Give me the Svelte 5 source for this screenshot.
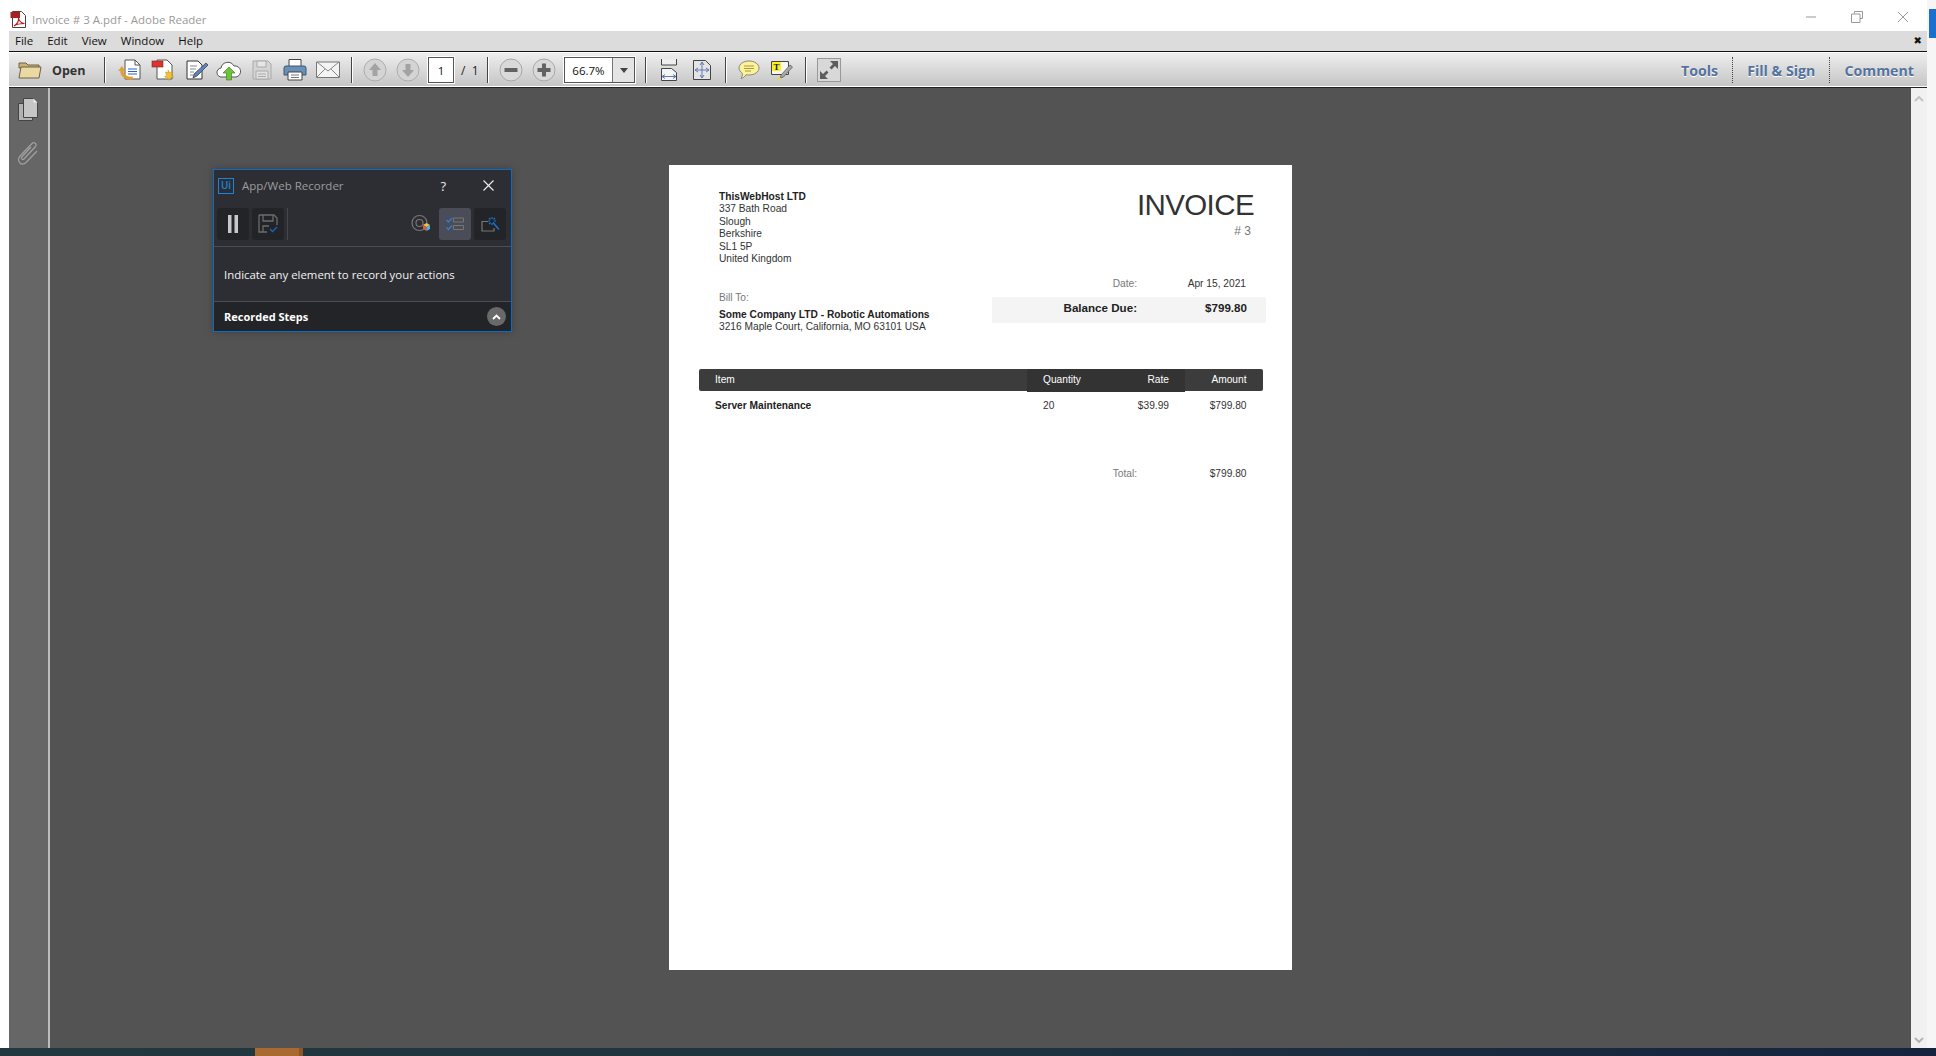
<script lang="ts">
  const menus = ['File', 'Edit', 'View', 'Window', 'Help'];
  const addressLines = ['337 Bath Road', 'Slough', 'Berkshire', 'SL1 5P', 'United Kingdom'];
</script>

<div class="screen">
  <div class="desktop">
    <div class="window">
      <header class="titlebar">
        <svg class="pdf-icon" width="17" height="17" viewBox="0 0 17 17">
          <path d="M2.500.500h9l4 4v12h-13z" fill="#fff" stroke="#5a3a3a"/>
          <path d="M.5 1h9.500v6H.5z" fill="#a32222"/>
          <path d="M4 15c3-2 5-5 4.500-8 .5 3 3 5 6 5.500-4 0-7.500.5-10.500 2.500z" fill="none" stroke="#b02020" stroke-width="1.200"/>
        </svg>
        <span class="title">Invoice # 3 A.pdf - Adobe Reader</span>
        <div class="window-controls">
          <svg width="12" height="12" viewBox="0 0 12 12"><path d="M1 6h10" stroke="#999" stroke-width="1"/></svg>
          <svg width="12" height="12" viewBox="0 0 12 12"><path d="M3.500 2.500V.5h8v7h-2.500M.5 3h8.500v8.500H.5z" fill="none" stroke="#999"/></svg>
          <svg width="12" height="12" viewBox="0 0 12 12"><path d="M1 1l10 10M11 1L1 11" stroke="#999"/></svg>
        </div>
      </header>

      <nav class="menubar">
        {#each menus as m}<span>{m}</span>{/each}
        <span class="menu-close">✖</span>
      </nav>

      <div class="toolbar">
        <button class="open-btn">
          <svg width="24" height="20" viewBox="0 0 24 20">
            <path d="M1 3h7l2 2h11v3H1z" fill="#c8b27a" stroke="#6f6242"/>
            <path d="M1 18L3 7h20l-2 11z" fill="#ebd9a3" stroke="#6f6242"/>
          </svg>
          Open
        </button>
        <i class="sep first"></i>

        <span class="tb">
          <svg width="24" height="24" viewBox="0 0 24 24">
            <path d="M7 2h10l5 5v14H7z" fill="#fff" stroke="#555"/>
            <path d="M17 2v5h5" fill="none" stroke="#555"/>
            <path d="M10 11h9M10 13.500h9M10 16h9" stroke="#2f62c0"/>
            <path d="M4 12c-1 5 4 9 11 8" fill="none" stroke="#e0a030" stroke-width="3"/>
            <path d="M4 8l-4 5h7z" fill="#e0a030"/>
          </svg>
        </span>
        <span class="tb">
          <svg width="24" height="24" viewBox="0 0 24 24">
            <path d="M6 2h10l5 5v14H6z" fill="#fff" stroke="#555"/>
            <rect x="1" y="3" width="11" height="6" fill="#d8362e" stroke="#8c1f1a" stroke-width=".6"/>
            <path d="M17 12l1.500 2.500 3-.5-1 3 2 2-3 .5-1.500 3-1.500-3-3-.5 2-2-1-3 3 .5z" fill="#f2c230" stroke="#b88a10" stroke-width=".5"/>
          </svg>
        </span>
        <span class="tb">
          <svg width="24" height="24" viewBox="0 0 24 24">
            <path d="M3 3h11l4 4v14H3z" fill="#fff" stroke="#333"/>
            <path d="M6 8h7M6 11h6M6 14h4M6 17h3" stroke="#888"/>
            <path d="M22 5l2 2-11 11-4 2 1-4z" fill="#5d84ba" stroke="#333" stroke-width=".7"/>
          </svg>
        </span>
        <span class="tb">
          <svg width="26" height="24" viewBox="0 0 26 24">
            <path d="M6 19a4.500 4.500 0 0 1-1-9 7 7 0 0 1 13-2 5.500 5.500 0 0 1 2 11z" fill="#fff" stroke="#555"/>
            <path d="M13 9l6 6h-3.500v7h-5v-7H7z" fill="#6fc23c" stroke="#3f8a1c" stroke-width=".7"/>
          </svg>
        </span>
        <span class="tb">
          <svg width="20" height="20" viewBox="0 0 20 20" fill="none" stroke="#aaa">
            <path d="M1 1h15l3 3v15H1z" fill="#d4d4d4"/>
            <path d="M5 1h9v6H5z" fill="#e6e6e6"/>
            <path d="M4 11h12v8H4z" fill="#e2e2e2"/>
            <path d="M6 14h8M6 16.500h8"/>
          </svg>
        </span>
        <span class="tb">
          <svg width="24" height="24" viewBox="0 0 24 24">
            <path d="M6 1.500h12v7H6z" fill="#fff" stroke="#444"/>
            <path d="M3 8h18a2 2 0 0 1 2 2v7H1v-7a2 2 0 0 1 2-2z" fill="#6a90b8" stroke="#3a5675"/>
            <path d="M5 14h14v8H5z" fill="#fff" stroke="#444"/>
            <path d="M8 17h8M8 19.500h8" stroke="#777"/>
          </svg>
        </span>
        <span class="tb">
          <svg width="24" height="18" viewBox="0 0 24 18">
            <path d="M.5 1h23v15.500H.5z" fill="#f4f4f4" stroke="#777"/>
            <path d="M1 1l11 9L23 1M1 16l8-8M23 16l-8-8" fill="none" stroke="#888"/>
          </svg>
        </span>
        <i class="sep"></i>

        <span class="tb">
          <svg width="24" height="24" viewBox="0 0 24 24">
            <circle cx="12" cy="12" r="11" fill="#d4d4d4" stroke="#adadad"/>
            <path d="M12 5l6 7h-3.500v6h-5v-6H6z" fill="#a3a3a3"/>
          </svg>
        </span>
        <span class="tb">
          <svg width="24" height="24" viewBox="0 0 24 24">
            <circle cx="12" cy="12" r="11" fill="#d4d4d4" stroke="#adadad"/>
            <path d="M12 19l6-7h-3.500V6h-5v6H6z" fill="#a3a3a3"/>
          </svg>
        </span>
        <span class="page-box">1</span>
        <span class="page-count">/&nbsp;&nbsp;1</span>
        <i class="sep after-count"></i>

        <span class="tb">
          <svg width="24" height="24" viewBox="0 0 24 24">
            <circle cx="12" cy="12" r="11" fill="#d9d9d9" stroke="#a8a8a8"/>
            <path d="M5.500 10h13v4h-13z" fill="#626262"/>
          </svg>
        </span>
        <span class="tb">
          <svg width="24" height="24" viewBox="0 0 24 24">
            <circle cx="12" cy="12" r="11" fill="#d9d9d9" stroke="#a8a8a8"/>
            <path d="M10 5.500h4V10h4.500v4H14v4.500h-4V14H5.500v-4H10z" fill="#626262"/>
          </svg>
        </span>
        <div class="zoom-box">
          <span class="zoom-value">66.7%</span>
          <span class="zoom-arrow"><svg width="8" height="5" viewBox="0 0 8 5"><path d="M0 0h8L4 5z" fill="#444"/></svg></span>
        </div>
        <i class="sep after-zoom"></i>

        <span class="tb">
          <svg width="18" height="22" viewBox="0 0 18 22">
            <path d="M1.500 0v6h15V0" fill="#eee" stroke="#444"/>
            <path d="M1.500 9.500h10l5 4v8h-15z" fill="#f4f4f4" stroke="#444"/>
            <path d="M2 17.500h14M2 17.500l3-2M2 17.500l3 2M16 17.500l-3-2M16 17.500l-3 2" fill="none" stroke="#6078b8"/>
          </svg>
        </span>
        <span class="tb">
          <svg width="18" height="20" viewBox="0 0 18 20">
            <path d="M.5.500h12l5 5v14H.5z" fill="#e4e4e4" stroke="#444"/>
            <path d="M9 2v16M2 10h14M9 2L7 5M9 2l2 3M9 18l-2-3M9 18l2-3M2 10l3-2M2 10l3 2M16 10l-3-2M16 10l-3 2" fill="none" stroke="#6078b8"/>
          </svg>
        </span>
        <i class="sep after-fit"></i>

        <span class="tb">
          <svg width="22" height="20" viewBox="0 0 22 20">
            <path d="M11 1c5.500 0 10 3 10 7s-4.500 7-10 7c-1 0-2 0-3-.300C7 16.500 5.500 18 3 18.500c1-1.500 1.500-3 1.500-5C2.500 12 1 10 1 8c0-4 4.500-7 10-7z" fill="#fbf29a" stroke="#8a8a7a"/>
            <path d="M6 6h10M6 8.500h10M7 11h6" stroke="#a89a40"/>
          </svg>
        </span>
        <span class="tb">
          <svg width="22" height="22" viewBox="0 0 22 22">
            <path d="M.5 2.500h17v13H.5z" fill="#f6f6f6" stroke="#444"/>
            <rect x="1" y="3" width="9" height="9" fill="#fdf01e"/>
            <text x="5.500" y="10.500" class="t-glyph" text-anchor="middle">T</text>
            <path d="M19 6l2.500 2-9 10-3 1 .5-3z" fill="#a8a8a8" stroke="#555" stroke-width=".7"/>
            <circle cx="8" cy="20" r="1.800" fill="#e8d25a"/>
          </svg>
        </span>
        <i class="sep after-note"></i>

        <span class="expand">
          <svg width="20" height="20" viewBox="0 0 20 20">
            <path d="M11 1h8v8l-3-3-3.500 3.500-2-2L14 4zM9 19H1v-8l3 3 3.500-3.500 2 2L6 16z" fill="#5c5c5c"/>
          </svg>
        </span>

        <div class="panel-links">
          <span class="link">Tools</span>
          <i class="dots"></i>
          <span class="link">Fill &amp; Sign</span>
          <i class="dots"></i>
          <span class="link">Comment</span>
        </div>
      </div>

      <div class="workspace">
        <aside class="rail">
          <svg width="20" height="23" viewBox="0 0 20 23">
            <path d="M.5 5.500h14v17H.5z" fill="#b2b2b2" stroke="#444"/>
            <path d="M5.500.500h10l4 4v15h-14z" fill="#c6c6c6" stroke="#444"/>
            <path d="M15.500.500v4h4z" fill="#eee"/>
          </svg>
          <svg width="22" height="26" viewBox="0 0 22 26" fill="none" stroke="#a0a0a0" stroke-width="1.300">
            <path d="M4 15L15 3.500c2-2 5.500.5 3.500 3L7 19c-1.300 1.300-3.500-.5-2-2.300L14 7"/>
            <path d="M4 15c-3 3-3 6-1 8 2 1.800 4.500 1 6.500-1L20 11"/>
          </svg>
        </aside>

        <main class="document">
          <section class="page">
            <div class="page-head">
              <div class="from">
                <b>ThisWebHost LTD</b>
                {#each addressLines as line}<div>{line}</div>{/each}
              </div>
              <div class="heading">
                <h1>INVOICE</h1>
                <div class="number"># 3</div>
              </div>
            </div>

            <div class="page-meta">
              <div class="bill">
                <div class="bill-label">Bill To:</div>
                <b>Some Company LTD - Robotic Automations</b>
                <div>3216 Maple Court, California, MO 63101 USA</div>
              </div>
              <div class="dates">
                <div class="date-row">
                  <span class="k">Date:</span>
                  <span class="v">Apr 15, 2021</span>
                </div>
                <div class="balance">
                  <span class="k">Balance Due:</span>
                  <span class="v">$799.80</span>
                </div>
              </div>
            </div>

            <div class="table-head">
              <span class="c-item">Item</span>
              <div class="mid">
                <span>Quantity</span>
                <span>Rate</span>
              </div>
              <span class="c-amount">Amount</span>
            </div>
            <div class="table-row">
              <b class="c-item">Server Maintenance</b>
              <span class="c-qty">20</span>
              <span class="c-rate">$39.99</span>
              <span class="c-amount">$799.80</span>
            </div>
            <div class="total">
              <span class="k">Total:</span>
              <span class="v">$799.80</span>
            </div>
          </section>
        </main>

        <div class="scrollbar">
          <svg width="10" height="6" viewBox="0 0 10 6"><path d="M1 5l4-4 4 4" fill="none" stroke="#c4c4c4" stroke-width="2"/></svg>
          <svg width="10" height="6" viewBox="0 0 10 6"><path d="M1 1l4 4 4-4" fill="none" stroke="#b4b4b4" stroke-width="2"/></svg>
        </div>

        <!-- floating recorder over the viewer -->
        <div class="recorder">
          <div class="rec-title">
            <span class="ui-logo">Ui</span>
            <span class="rec-name">App/Web Recorder</span>
            <span class="rec-help">?</span>
            <svg class="rec-x" width="11" height="11" viewBox="0 0 11 11"><path d="M.5.500l10 10M10.500.500l-10 10" stroke="#eee" stroke-width="1.100"/></svg>
          </div>
          <div class="rec-tools">
            <span class="rec-btn">
              <svg width="12" height="18" viewBox="0 0 12 18"><path d="M1 0h3.500v18H1zM7.500 0H11v18H7.500z" fill="#c8c8c8"/></svg>
            </span>
            <span class="rec-btn">
              <svg width="20" height="20" viewBox="0 0 20 20" fill="none">
                <path d="M1 1h15l3 3v7M1 1v17h8M5 1v6h10V1M5 18v-6h6" stroke="#6c6c6c" stroke-width="1.300"/>
                <path d="M12 15l2.500 2.500L19 13" stroke="#1666b8" stroke-width="1.300"/>
              </svg>
            </span>
            <i class="rec-sep"></i>
            <span class="rec-target">
              <svg width="20" height="20" viewBox="0 0 20 20" fill="none">
                <circle cx="8.500" cy="9" r="7.500" stroke="#777" stroke-width="1.200"/>
                <circle cx="8.500" cy="9" r="3.500" stroke="#777" stroke-width="1.200"/>
                <path d="M12 11l3.500-2 3.500 2-3.500 2z" fill="#f2c23c"/>
                <path d="M12 11v4l3.500 2v-4z" fill="#e0583a"/>
                <path d="M19 11v4l-3.500 2v-4z" fill="#4ab4e8"/>
              </svg>
            </span>
            <span class="rec-btn active">
              <svg width="18" height="14" viewBox="0 0 18 14" fill="none">
                <path d="M.5 3l2 2L6 1M.5 10.500l2 2L6 8.500" stroke="#2a80d8" stroke-width="1.300"/>
                <path d="M7.500 1h10v4h-10zM7.500 8.500h10v4h-10z" stroke="#777"/>
              </svg>
            </span>
            <span class="rec-btn">
              <svg width="19" height="15" viewBox="0 0 19 15" fill="none">
                <path d="M7 4.500H1v9.500h12v-3" stroke="#777" stroke-width="1.200"/>
                <path d="M11 0v2M11 6v2M7 4h2M13 4h2M8 1l1.500 1.500M14 1l-1.500 1.500M8 7l1.500-1.500" stroke="#1a74d0" stroke-width="1.200"/>
                <path d="M12 5.500l6 7" stroke="#1a74d0" stroke-width="1.500"/>
              </svg>
            </span>
          </div>
          <div class="rec-message">Indicate any element to record your actions</div>
          <div class="rec-footer">
            <b>Recorded Steps</b>
            <span class="rec-collapse">
              <svg width="9" height="6" viewBox="0 0 9 6"><path d="M1 5l3.500-3.500L8 5" fill="none" stroke="#fff" stroke-width="1.800"/></svg>
            </span>
          </div>
        </div>
      </div>
    </div>

    <div class="edge"><div class="edge-blue"></div></div>
  </div>

  <footer class="taskbar">
    <span class="task-active"></span>
    <span class="clock">10:50 AM</span>
  </footer>
</div>

<style>
  :global(body) {
    margin: 0;
    background: #fff;
  }

  .screen {
    width: 1936px;
    height: 1056px;
    display: flex;
    flex-direction: column;
    overflow: hidden;
    font-family: "Open Sans", "Noto Sans", sans-serif;
    background: #fff;
  }

  .desktop {
    flex: 1;
    min-height: 0;
    display: flex;
    padding-left: 9px;
  }

  .window {
    flex: 1;
    min-width: 0;
    display: flex;
    flex-direction: column;
  }

  .titlebar {
    height: 31px;
    display: flex;
    align-items: center;
    padding-left: 1px;
    padding-top: 7px;
    box-sizing: border-box;
    background: #fff;
  }

  .pdf-icon {
    margin-right: 5px;
  }

  .title {
    font-size: 11.5px;
    color: #9a9a9a;
  }

  .window-controls {
    margin-left: auto;
    display: flex;
    gap: 34px;
    padding-right: 18px;
    margin-top: -5px;
  }

  .menubar {
    height: 20px;
    box-sizing: border-box;
    padding: 0 0 2px 6px;
    display: flex;
    align-items: center;
    gap: 14px;
    background: #dcdcdc;
    font-size: 11.5px;
    color: #111;
  }

  .menu-close {
    margin-left: auto;
    margin-right: 5px;
    font-size: 10px;
    font-family: "DejaVu Sans", sans-serif;
    color: #111;
  }

  .toolbar {
    height: 34px;
    display: flex;
    align-items: center;
    border-top: 1px solid #111;
    border-bottom: 1px solid #222;
    box-shadow: inset 0 1px 0 #fff, inset 0 -1px 0 #fff;
    background: linear-gradient(#efefef, #c4c4c4);
    padding-top: 1px;
  }

  .open-btn {
    display: flex;
    align-items: center;
    gap: 10px;
    width: 95px;
    padding: 0 0 0 9px;
    box-sizing: border-box;
    border: none;
    background: none;
    font: 700 12.5px "Open Sans", sans-serif;
    color: #333;
  }

  .sep {
    width: 1px;
    height: 26px;
    background: #444;
    box-shadow: 1px 0 0 #fff;
    margin: 0 6px 0 7px;
  }

  .sep.first {
    margin: 0 8px 0 0;
  }

  .sep.after-count {
    margin-left: 9px;
  }

  .sep.after-zoom {
    margin-left: 10px;
  }

  .sep.after-fit {
    margin-left: 7px;
  }

  .sep.after-note {
    margin-left: 7px;
    margin-right: 11px;
  }

  .tb {
    width: 33px;
    height: 26px;
    display: flex;
    align-items: center;
    justify-content: center;
    flex: none;
  }

  .page-box {
    width: 26px;
    height: 26px;
    margin-left: 4px;
    box-sizing: border-box;
    border: 1px solid #555;
    outline: 1px solid #fff;
    background: #fff;
    font-size: 11.5px;
    color: #111;
    display: flex;
    align-items: center;
    justify-content: center;
  }

  .page-count {
    margin-left: 7px;
    width: 17px;
    font-size: 12px;
    color: #222;
    white-space: nowrap;
  }

  .zoom-box {
    width: 71px;
    height: 26px;
    margin-left: 4px;
    box-sizing: border-box;
    border: 1px solid #555;
    outline: 1px solid #fff;
    background: #fff;
    display: flex;
  }

  .zoom-value {
    flex: 1;
    font-size: 11.5px;
    color: #111;
    display: flex;
    align-items: center;
    justify-content: center;
  }

  .zoom-arrow {
    width: 21px;
    border-left: 1px solid #777;
    background: #e4e4e4;
    display: flex;
    align-items: center;
    justify-content: center;
  }

  .t-glyph {
    font: 700 9px "Liberation Serif", serif;
    fill: #222;
  }

  .expand {
    width: 24px;
    height: 24px;
    box-sizing: border-box;
    border: 1px solid #999;
    background: #d8d8d8;
    display: flex;
    align-items: center;
    justify-content: center;
  }

  .panel-links {
    margin-left: auto;
    display: flex;
    align-items: center;
    padding-right: 13px;
  }

  .link {
    font-size: 14.2px;
    font-weight: 700;
    color: #54739e;
    text-shadow: 0 1px 0 #fff;
  }

  .dots {
    height: 26px;
    border-left: 1px dotted #444;
    margin: 0 14px;
  }

  .workspace {
    flex: 1;
    min-height: 0;
    display: flex;
    position: relative;
  }

  .rail {
    width: 41px;
    flex: none;
    box-sizing: border-box;
    background: #666;
    border-right: 2px solid #bdbdbd;
    box-shadow: 1px 0 0 #333;
    display: flex;
    flex-direction: column;
    align-items: center;
    gap: 19px;
    padding-top: 10px;
    padding-right: 2px;
  }

  .document {
    flex: 1;
    min-width: 0;
    background: #535353;
    display: flex;
    justify-content: center;
    align-items: flex-start;
    padding-top: 77px;
  }

  .scrollbar {
    width: 16px;
    flex: none;
    background: #f1f1f1;
    display: flex;
    flex-direction: column;
    justify-content: space-between;
    align-items: center;
    padding: 8px 0 5px;
    box-sizing: border-box;
  }

  /* pdf page */
  .page {
    width: 623px;
    height: 805px;
    box-sizing: border-box;
    background: #fff;
    padding: 26px 0 0 50px;
    font-family: "Liberation Sans", Arial, sans-serif;
    font-size: 10.2px;
    line-height: 12.4px;
    color: #333;
  }

  .page b {
    color: #222;
  }

  .page-head {
    display: flex;
    justify-content: space-between;
    height: 74px;
  }

  .from b {
    display: block;
  }

  .heading {
    text-align: right;
    padding-right: 38px;
  }

  h1 {
    margin: -3px 0 0;
    font-size: 29.5px;
    letter-spacing: -0.6px;
    line-height: 34px;
    font-weight: 400;
    color: #333;
  }

  .number {
    margin-top: 2px;
    padding-right: 3px;
    font-size: 12px;
    line-height: 14px;
    color: #777;
  }

  .page-meta {
    display: flex;
    justify-content: space-between;
    height: 104px;
  }

  .bill {
    padding-top: 27px;
  }

  .bill-label {
    color: #777;
    margin-bottom: 4.6px;
  }

  .bill b {
    display: block;
    font-size: 10.2px;
  }

  .dates {
    width: 274px;
    margin-right: 26px;
    padding-top: 13px;
  }

  .date-row,
  .balance {
    display: flex;
  }

  .k {
    width: 145px;
    text-align: right;
    color: #777;
  }

  .v {
    flex: 1;
    text-align: right;
  }

  .date-row {
    padding-right: 20px;
    height: 18.700px;
  }

  .balance {
    height: 26.600px;
    align-items: center;
    padding: 0 19px 3px 0;
    box-sizing: border-box;
    background: #f4f4f4;
    border-radius: 2px;
    font-size: 11.6px;
    font-weight: 700;
  }

  .balance .k,
  .balance .v {
    color: #222;
  }

  .table-head {
    width: 563.500px;
    height: 22px;
    margin-left: -20px;
    display: flex;
    align-items: center;
    background: #3c3c3c;
    border-radius: 2px;
    color: #fff;
  }

  .table-head .c-item {
    width: 328px;
    padding-left: 16px;
    box-sizing: border-box;
  }

  .mid {
    width: 158px;
    height: 23px;
    box-sizing: border-box;
    padding: 0 16px;
    background: #333;
    display: flex;
    justify-content: space-between;
    align-items: center;
  }

  .c-amount {
    flex: 1;
    text-align: right;
    padding-right: 16px;
  }

  .table-row {
    width: 563.500px;
    margin-left: -20px;
    margin-top: 8.700px;
    display: flex;
  }

  .table-row .c-item {
    width: 344px;
    padding-left: 16px;
    box-sizing: border-box;
  }

  .c-qty {
    width: 42px;
  }

  .c-rate {
    width: 84px;
    text-align: right;
  }

  .total {
    width: 527.500px;
    margin-top: 55.500px;
    display: flex;
  }

  .total .k {
    width: 418px;
  }

  /* recorder window */
  .recorder {
    position: absolute;
    left: 204px;
    top: 81px;
    width: 299px;
    height: 163px;
    box-sizing: border-box;
    border: 1px solid #0a6cc4;
    background: #2d2e33;
    box-shadow: 0 0 8px rgba(0, 0, 0, 0.25);
    display: flex;
    flex-direction: column;
    font-family: "Open Sans", sans-serif;
  }

  .rec-title {
    height: 32px;
    flex: none;
    display: flex;
    align-items: center;
    padding: 0 17px 1px 4px;
    box-sizing: border-box;
  }

  .ui-logo {
    width: 16px;
    height: 16px;
    box-sizing: border-box;
    border: 1.500px solid #1b84d8;
    color: #1b84d8;
    font-size: 10px;
    line-height: 13px;
    text-align: center;
    font-weight: 600;
  }

  .rec-name {
    margin-left: 8px;
    font-size: 11.500px;
    color: #9c9c9c;
  }

  .rec-help {
    margin-left: auto;
    margin-right: 37px;
    font-size: 13px;
    color: #eee;
  }

  .rec-tools {
    height: 45px;
    flex: none;
    box-sizing: border-box;
    display: flex;
    align-items: flex-start;
    padding: 6px 5px 0 3px;
    gap: 3px;
    border-bottom: 1px solid #4c4d50;
  }

  .rec-btn {
    width: 32px;
    height: 32px;
    border-radius: 3px;
    background: #232428;
    display: flex;
    align-items: center;
    justify-content: center;
  }

  .rec-btn.active {
    background: #4a4d57;
  }

  .rec-sep {
    width: 1px;
    height: 32px;
    background: #46474a;
  }

  .rec-target {
    margin-left: auto;
    margin-right: 3px;
    width: 24px;
    height: 32px;
    display: flex;
    align-items: center;
    justify-content: center;
  }

  .rec-message {
    flex: 1;
    display: flex;
    align-items: center;
    padding-left: 10px;
    font-size: 11.400px;
    color: #f2f2f2;
    border-bottom: 1px solid #4c4d50;
  }

  .rec-footer {
    height: 29px;
    flex: none;
    box-sizing: border-box;
    display: flex;
    align-items: center;
    justify-content: space-between;
    padding: 0 5px 0 10px;
    background: #232428;
    font-size: 11px;
    color: #fff;
  }

  .rec-collapse {
    width: 19px;
    height: 19px;
    border-radius: 50%;
    background: #696969;
    display: flex;
    align-items: center;
    justify-content: center;
  }

  .edge {
    width: 9px;
    flex: none;
    background: #f6f6f6;
    padding-top: 9px;
    padding-left: 2px;
    box-sizing: border-box;
    display: flex;
    flex-direction: column;
    justify-content: space-between;
  }

  .edge-blue {
    height: 29px;
    background: #1a6fd0;
  }

  .taskbar {
    height: 8px;
    flex: none;
    display: flex;
    position: relative;
    background: linear-gradient(90deg, #22383f, #1f3340 50%, #15233f);
  }

  .task-active {
    margin-left: 255px;
    width: 48px;
    background: linear-gradient(90deg, #a86a30 92%, #8e5526 92%);
  }

  .clock {
    position: absolute;
    left: 1818px;
    top: 5px;
    font-size: 11.500px;
    line-height: 16px;
    color: #fff;
  }
</style>
